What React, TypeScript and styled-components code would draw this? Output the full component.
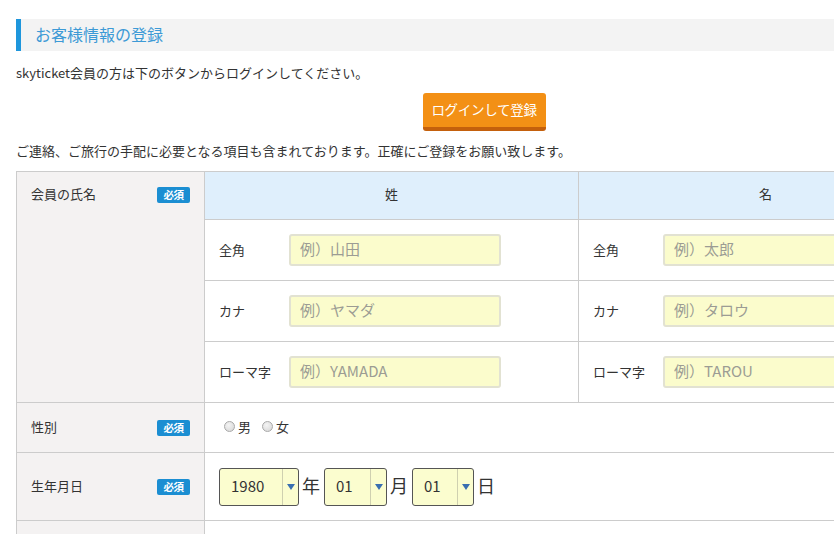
import React from "react";
import styled, { createGlobalStyle } from "styled-components";

const Global = createGlobalStyle`
  html, body { margin: 0; padding: 0; background: #fff; overflow: hidden; }
  body {
    font-family: "Noto Sans CJK JP", "Noto Sans", "Liberation Sans", sans-serif;
    color: #333;
    font-size: 13px;
  }
  * { box-sizing: border-box; }
`;

const Page = styled.div`
  width: 952px;
  padding: 19px 0 0 16px;
`;

const Container = styled.div`
  width: 936px;
`;

const SectionTitle = styled.h2`
  margin: 0;
  height: 32px;
  background: #f3f3f3;
  border-left: 5px solid #1e96dc;
  padding: 0 0 2px 14px;
  display: flex;
  align-items: center;
  font-size: 16px;
  font-weight: normal;
  color: #3d9ad6;
  line-height: 1;
`;

const Note = styled.p<{ $top: number }>`
  margin: ${(p) => p.$top}px 0 0;
  font-size: 13px;
  line-height: 20px;
`;

const ButtonRow = styled.div`
  display: flex;
  justify-content: center;
  margin-top: 10px;
`;

const LoginButton = styled.button`
  width: 123px;
  height: 38px;
  border: none;
  border-bottom: 4px solid #c4600c;
  border-radius: 3px;
  background: #f39015;
  color: #fff;
  font-family: inherit;
  font-size: 13.5px;
  letter-spacing: -0.3px;
  padding: 0 0 2px;
  cursor: pointer;
`;

const FormGrid = styled.div`
  margin-top: 10px;
  display: grid;
  grid-template-columns: 188px 374px 374px;
  grid-template-rows: 48px 61px 61px 61px 50px 68px 40px;
  border-top: 1px solid #cccccc;
  border-left: 1px solid #cccccc;
`;

const HeadCell = styled.div<{ $rows?: number; $top?: boolean }>`
  grid-row: span ${(p) => p.$rows ?? 1};
  background: #f4f2f2;
  border-right: 1px solid #cccccc;
  border-bottom: 1px solid #cccccc;
  padding: ${(p) => (p.$top ? "11px" : "0")} 14px ${(p) => (p.$top ? "0" : "2px")} 14px;
  display: flex;
  align-items: ${(p) => (p.$top ? "flex-start" : "center")};
`;

const HeadInner = styled.div`
  flex: 1;
  display: flex;
  justify-content: space-between;
  align-items: center;
  line-height: 22px;
`;

const Badge = styled.span`
  display: inline-flex;
  align-items: center;
  justify-content: center;
  width: 33px;
  height: 16px;
  border-radius: 2px;
  background: #1b8ed2;
  color: #fff;
  font-size: 10.5px;
  font-weight: bold;
  letter-spacing: -0.5px;
  margin-top: 2px;
`;

const ColHead = styled.div`
  background: #dfeffc;
  border-right: 1px solid #cccccc;
  border-bottom: 1px solid #cccccc;
  display: flex;
  align-items: center;
  justify-content: center;
  padding-bottom: 4px;
`;

const Cell = styled.div<{ $span?: number }>`
  grid-column: span ${(p) => p.$span ?? 1};
  border-right: 1px solid #cccccc;
  border-bottom: 1px solid #cccccc;
  display: flex;
  align-items: center;
  padding-left: 14px;
`;

const SubLabel = styled.span`
  width: 70px;
  flex: none;
  padding-bottom: 2px;
`;

const TextInput = styled.input`
  width: 212px;
  height: 32px;
  background: #fbfccc;
  border: 2px solid #e2e2d2;
  border-radius: 3px;
  padding: 0 9px 3px;
  font-family: inherit;
  font-size: 15px;
  color: #333;
  outline: none;
  &::placeholder { color: #9c9c94; }
`;

const RadioGroup = styled.div`
  display: flex;
  align-items: center;
  gap: 11px;
  padding-left: 5px;
  padding-bottom: 2px;
`;

const RadioLabel = styled.label`
  display: flex;
  align-items: center;
  gap: 3px;
  font-size: 13px;
`;

const RadioDot = styled.span`
  width: 11px;
  height: 11px;
  border-radius: 50%;
  border: 1px solid #a9a9a9;
  background: radial-gradient(circle at 40% 35%, #f4f4f4, #d4d4d4);
`;

const DateRow = styled.div`
  display: flex;
  align-items: center;
`;

const SelectBox = styled.div<{ $w: number }>`
  width: ${(p) => p.$w}px;
  height: 38px;
  background: #fbfdcf;
  border: 1px solid #555;
  border-radius: 3px;
  display: flex;
  align-items: stretch;
  font-size: 15px;
  color: #333;
`;

const SelectValue = styled.span`
  flex: 1;
  display: flex;
  align-items: center;
  padding: 0 0 2px 11px;
`;

const SelectArrow = styled.span`
  width: 16px;
  border-left: 1px solid #cfd0b0;
  display: flex;
  align-items: center;
  justify-content: center;
`;

const Unit = styled.span`
  font-size: 18px;
  margin: 0 4px 3px 3px;
`;

const Arrow = () => (
  <SelectArrow>
    <svg width="8" height="6" viewBox="0 0 8 6">
      <polygon points="0,0 8,0 4,6" fill="#3a6fb1" />
    </svg>
  </SelectArrow>
);

const Select = ({ w, value }: { w: number; value: string }) => (
  <SelectBox $w={w}>
    <SelectValue>{value}</SelectValue>
    <Arrow />
  </SelectBox>
);

const NameField = ({ label, ph }: { label: string; ph: string }) => (
  <Cell>
    <SubLabel>{label}</SubLabel>
    <TextInput placeholder={ph} />
  </Cell>
);

export default function App() {
  return (
    <>
      <Global />
      <Page>
        <Container>
          <SectionTitle>お客様情報の登録</SectionTitle>
          <Note $top={12}>skyticket会員の方は下のボタンからログインしてください。</Note>
          <ButtonRow>
            <LoginButton>ログインして登録</LoginButton>
          </ButtonRow>
          <Note $top={10}>
            ご連絡、ご旅行の手配に必要となる項目も含まれております。正確にご登録をお願い致します。
          </Note>
          <FormGrid>
            <HeadCell $rows={4} $top>
              <HeadInner>
                <span>会員の氏名</span>
                <Badge>必須</Badge>
              </HeadInner>
            </HeadCell>
            <ColHead>姓</ColHead>
            <ColHead>名</ColHead>
            <NameField label="全角" ph="例）山田" />
            <NameField label="全角" ph="例）太郎" />
            <NameField label="カナ" ph="例）ヤマダ" />
            <NameField label="カナ" ph="例）タロウ" />
            <NameField label="ローマ字" ph="例）YAMADA" />
            <NameField label="ローマ字" ph="例）TAROU" />

            <HeadCell>
              <HeadInner>
                <span>性別</span>
                <Badge>必須</Badge>
              </HeadInner>
            </HeadCell>
            <Cell $span={2}>
              <RadioGroup>
                <RadioLabel>
                  <RadioDot />男
                </RadioLabel>
                <RadioLabel>
                  <RadioDot />女
                </RadioLabel>
              </RadioGroup>
            </Cell>

            <HeadCell>
              <HeadInner>
                <span>生年月日</span>
                <Badge>必須</Badge>
              </HeadInner>
            </HeadCell>
            <Cell $span={2}>
              <DateRow>
                <Select w={80} value="1980" />
                <Unit>年</Unit>
                <Select w={63} value="01" />
                <Unit>月</Unit>
                <Select w={62} value="01" />
                <Unit>日</Unit>
              </DateRow>
            </Cell>

            <HeadCell />
            <Cell $span={2} />
          </FormGrid>
        </Container>
      </Page>
    </>
  );
}
